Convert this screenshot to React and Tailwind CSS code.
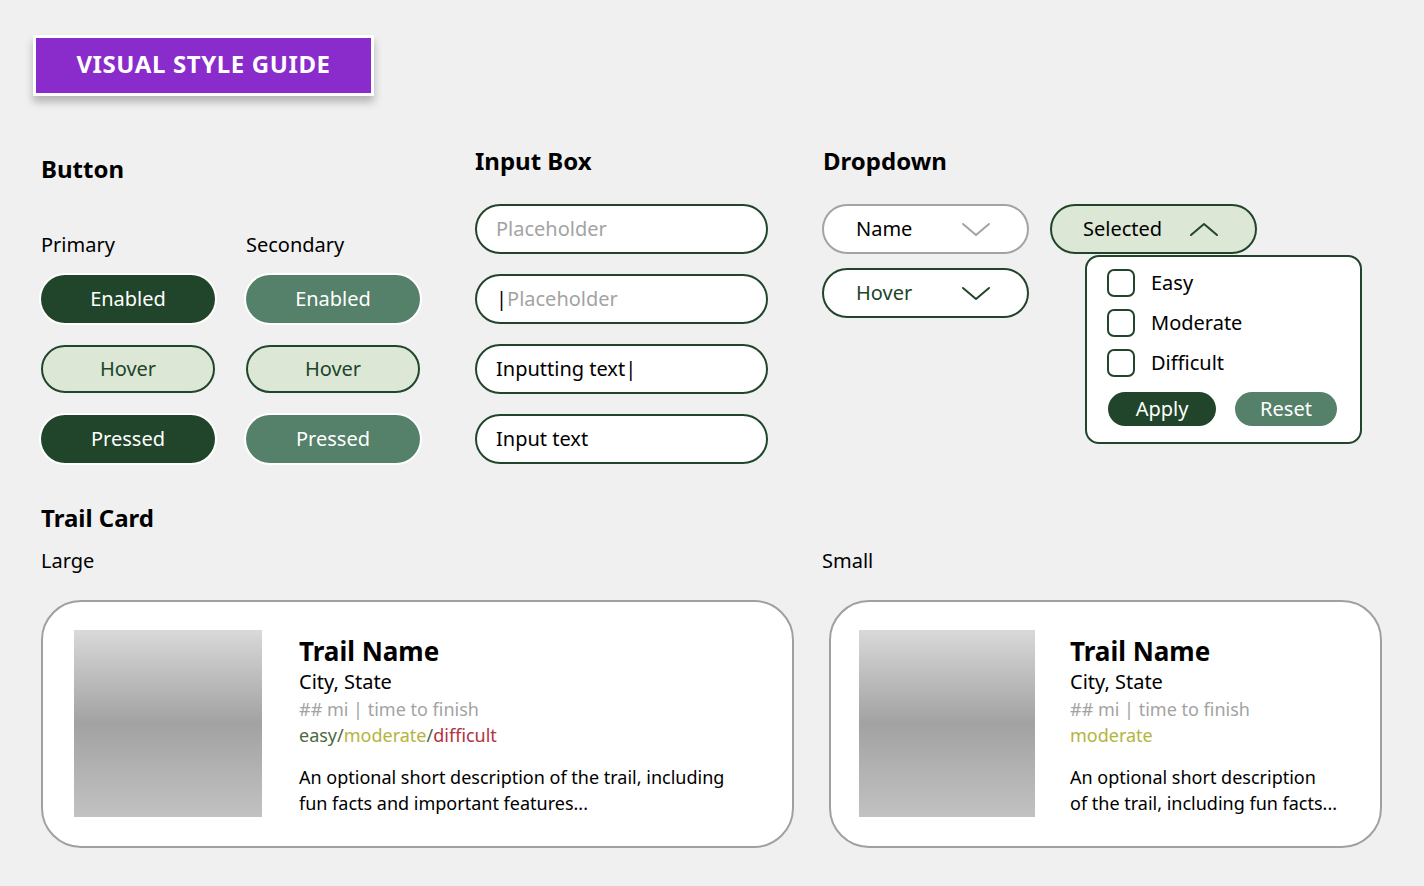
import React from "react";

const FONT = { fontFamily: '"Noto Sans", "Open Sans", sans-serif' };

function Chevron({ up = false, color = "#20452a" }) {
  return (
    <svg width="30" height="16" viewBox="0 0 30 16" fill="none">
      <path
        d={up ? "M2 14 L15 3 L28 14" : "M2 3 L15 14 L28 3"}
        stroke={color}
        strokeWidth="2"
        strokeLinecap="round"
        strokeLinejoin="round"
      />
    </svg>
  );
}

function Btn({ kind, children }) {
  const styles = {
    primary: "bg-[#20452a] text-white ring-2 ring-white",
    secondary: "bg-[#55806a] text-white ring-2 ring-white",
    hover: "bg-[#dce7d6] text-[#20452a] border-2 border-[#20452a]",
  };
  return (
    <div
      className={`w-[174px] h-[48px] rounded-full flex items-center justify-center text-[20px] ${styles[kind]}`}
    >
      {children}
    </div>
  );
}

function InputBox({ children }) {
  return (
    <div className="w-[293px] h-[50px] rounded-full border-2 border-[#20452a] bg-white flex items-center px-[19px] text-[20px]">
      {children}
    </div>
  );
}

function Check({ label }) {
  return (
    <div className="flex items-center gap-4 h-[28px]">
      <div className="w-[28px] h-[28px] rounded-[7px] border-2 border-[#20452a] bg-white" />
      <span className="text-[20px] text-black">{label}</span>
    </div>
  );
}

function TrailCard({ width, imgW, textPl, small }) {
  return (
    <div
      className={`${width} h-[248px] rounded-[40px] border-2 border-[#a0a0a0] bg-white flex items-start pt-[28px]`}
    >
      <div
        className={`${imgW} h-[187px] shrink-0 bg-gradient-to-b from-[#d9d9d9] via-[#a2a2a2] to-[#c2c2c2]`}
      />
      <div className={`${textPl} pt-[4px] flex flex-col`}>
        <div className="text-[26px] font-bold leading-[34px] text-black">Trail Name</div>
        <div className="text-[20px] leading-[28px] text-black">City, State</div>
        <div className="text-[18px] leading-[26px] text-[#a3a3a3]">## mi | time to finish</div>
        {small ? (
          <div className="text-[18px] leading-[26px] text-[#b4b43c]">moderate</div>
        ) : (
          <div className="text-[18px] leading-[26px]">
            <span className="text-[#4a6a3c]">easy/</span>
            <span className="text-[#b4b43c]">moderate</span>
            <span className="text-[#4a6a3c]">/</span>
            <span className="text-[#b3313f]">difficult</span>
          </div>
        )}
        <div className="mt-[16px] text-[18px] leading-[26px] text-black">
          {small ? (
            <>
              An optional short description
              <br />
              of the trail, including fun facts...
            </>
          ) : (
            <>
              An optional short description of the trail, including
              <br />
              fun facts and important features...
            </>
          )}
        </div>
      </div>
    </div>
  );
}

export default function App() {
  return (
    <div className="min-h-screen w-full bg-[#f0f0f0] text-black pt-[35px]" style={FONT}>
      {/* title */}
      <div className="ml-[33px] w-[341px] h-[61px] border-[3px] border-white bg-[#8a2bcc] shadow-[0_6px_8px_rgba(0,0,0,0.25)] flex items-center justify-center pb-[4px]">
        <span className="text-[24px] font-bold text-white tracking-[0.6px]">VISUAL STYLE GUIDE</span>
      </div>

      <div className="flex pl-[41px] mt-[49px]">
        {/* Button */}
        <div className="w-[434px]">
          <h2 className="text-[24px] font-bold leading-[32px] mt-[8px]">Button</h2>
          <div className="flex gap-[31px] mt-[46px]">
            <div className="flex flex-col">
              <div className="text-[20px] leading-[28px] mb-[16px]">Primary</div>
              <div className="flex flex-col gap-[22px]">
                <Btn kind="primary">Enabled</Btn>
                <Btn kind="hover">Hover</Btn>
                <Btn kind="primary">Pressed</Btn>
              </div>
            </div>
            <div className="flex flex-col">
              <div className="text-[20px] leading-[28px] mb-[16px]">Secondary</div>
              <div className="flex flex-col gap-[22px]">
                <Btn kind="secondary">Enabled</Btn>
                <Btn kind="hover">Hover</Btn>
                <Btn kind="secondary">Pressed</Btn>
              </div>
            </div>
          </div>
        </div>

        {/* Input */}
        <div className="w-[347px]">
          <h2 className="text-[24px] font-bold leading-[32px]">Input Box</h2>
          <div className="flex flex-col gap-[20px] mt-[27px]">
            <InputBox>
              <span className="text-[#a3a3a3]">Placeholder</span>
            </InputBox>
            <InputBox>
              <span className="text-black">|</span>
              <span className="text-[#a3a3a3]">Placeholder</span>
            </InputBox>
            <InputBox>
              <span>Inputting text|</span>
            </InputBox>
            <InputBox>
              <span>Input text</span>
            </InputBox>
          </div>
        </div>

        {/* Dropdown */}
        <div className="flex-1">
          <h2 className="text-[24px] font-bold leading-[32px] ml-[1px]">Dropdown</h2>
          <div className="flex gap-[21px] mt-[27px] items-start">
            <div className="flex flex-col gap-[14px]">
              <div className="w-[207px] h-[50px] rounded-full border-2 border-[#a3a3a3] bg-white flex items-center justify-between pl-[32px] pr-[36px] text-[20px]">
                <span>Name</span>
                <Chevron color="#a3a3a3" />
              </div>
              <div className="w-[207px] h-[50px] rounded-full border-2 border-[#20452a] bg-white flex items-center justify-between pl-[32px] pr-[36px] text-[20px] text-[#20452a]">
                <span>Hover</span>
                <Chevron />
              </div>
            </div>
            <div className="flex flex-col">
              <div className="w-[207px] h-[50px] rounded-full border-2 border-[#20452a] bg-[#dce7d6] flex items-center pl-[31px] gap-[27px] text-[20px] text-black">
                <span>Selected</span>
                <Chevron up />
              </div>
              <div className="ml-[35px] mt-[1px] w-[277px] h-[189px] rounded-[14px] border-2 border-[#20452a] bg-white pl-[20px] pt-[12px] flex flex-col">
                <div className="flex flex-col gap-[12px]">
                  <Check label="Easy" />
                  <Check label="Moderate" />
                  <Check label="Difficult" />
                </div>
                <div className="flex gap-[19px] mt-[15px] ml-[1px]">
                  <div className="w-[108px] h-[34px] rounded-full bg-[#20452a] text-white text-[20px] flex items-center justify-center">
                    Apply
                  </div>
                  <div className="w-[102px] h-[34px] rounded-full bg-[#55806a] text-white text-[20px] flex items-center justify-center">
                    Reset
                  </div>
                </div>
              </div>
            </div>
          </div>
        </div>
      </div>

      {/* Trail card */}
      <div className="pl-[41px] mt-[38px]">
        <h2 className="text-[24px] font-bold leading-[32px]">Trail Card</h2>
        <div className="flex mt-[13px]">
          <div className="w-[781px]">
            <div className="text-[20px] leading-[28px]">Large</div>
          </div>
          <div className="text-[20px] leading-[28px]">Small</div>
        </div>
        <div className="flex gap-[35px] mt-[25px]">
          <TrailCard width="w-[753px]" imgW="ml-[31px] w-[188px]" textPl="pl-[37px]" />
          <TrailCard width="w-[553px]" imgW="ml-[28px] w-[176px]" textPl="pl-[35px]" small />
        </div>
      </div>
    </div>
  );
}
